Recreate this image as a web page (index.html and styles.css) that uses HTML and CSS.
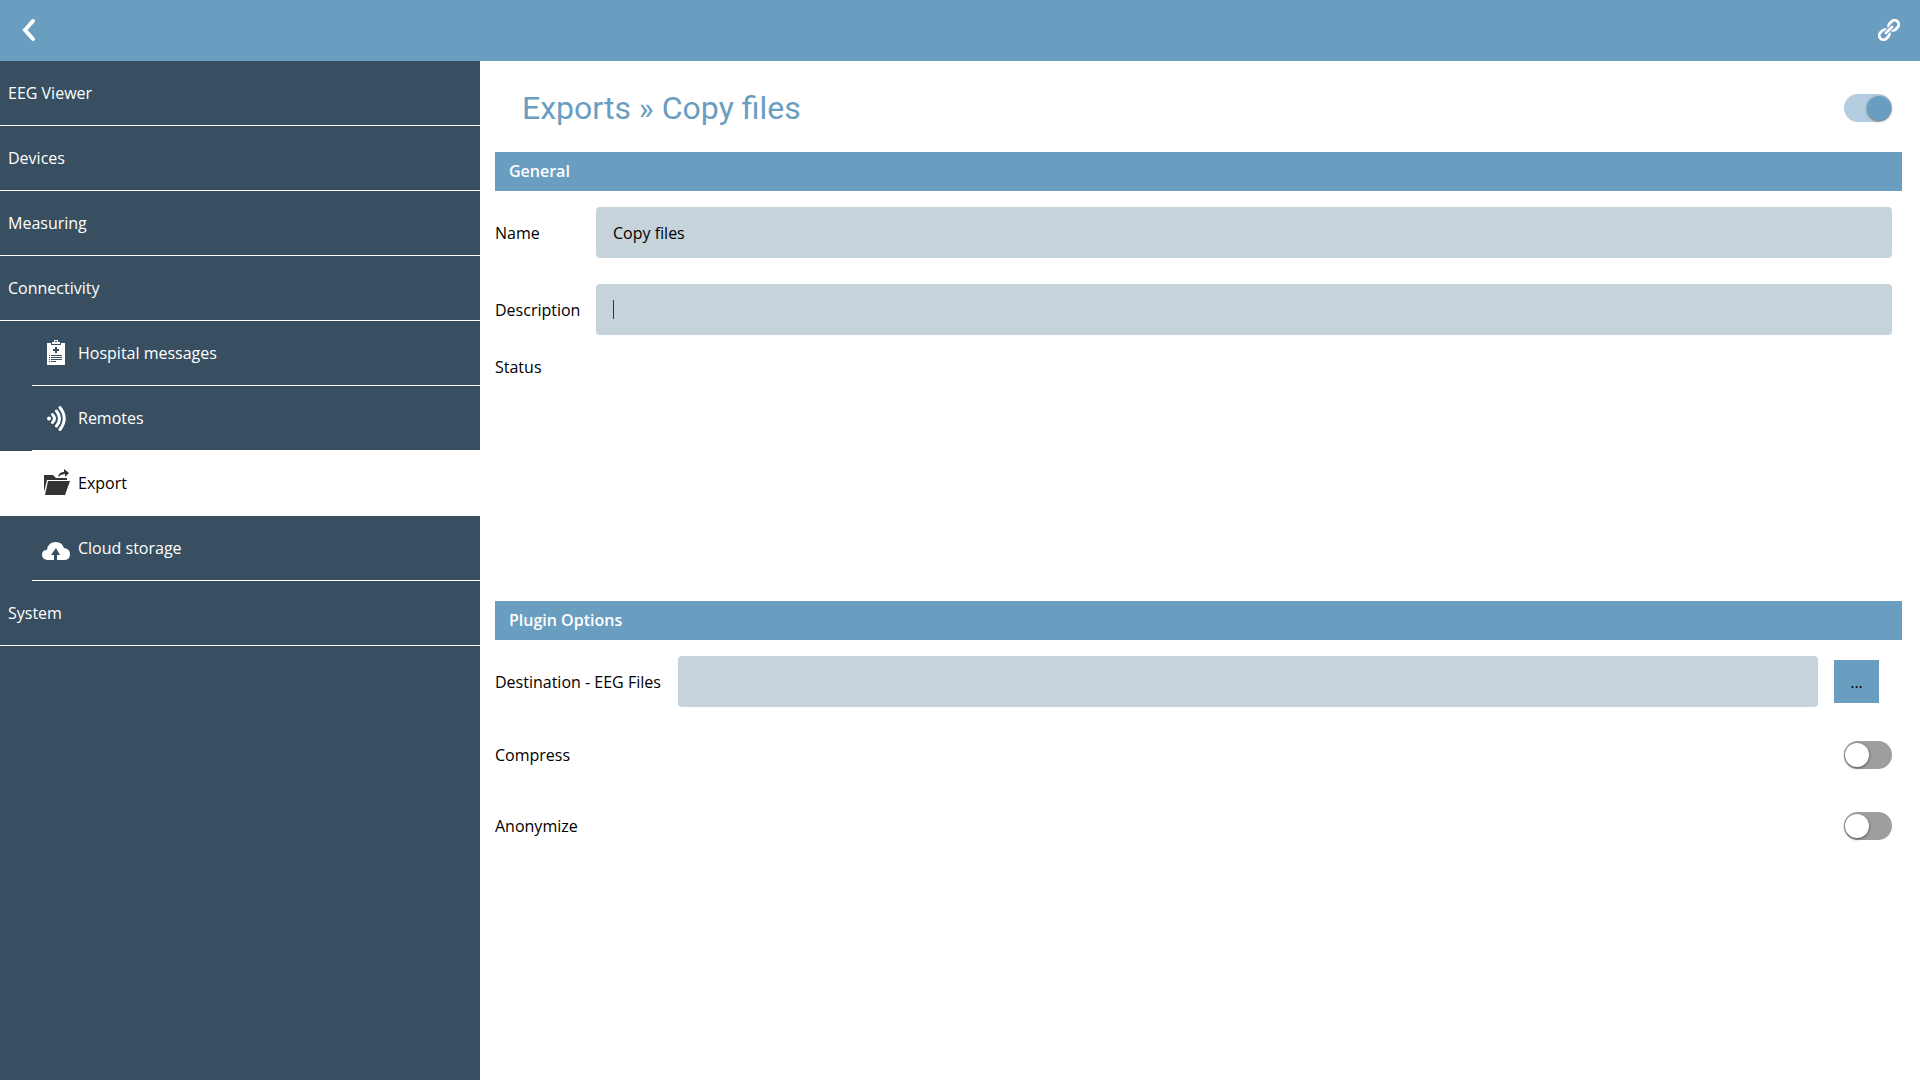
FILE: index.html
```html
<!DOCTYPE html>
<html lang="en">
<head>
  <meta charset="UTF-8" />
  <meta name="viewport" content="width=device-width, initial-scale=1.0" />
  <title>Exports » Copy files</title>
  <link rel="stylesheet" href="styles.css">
</head>
<body>
  <header class="topbar">
    <button class="icon-button" type="button" aria-label="Back">
      <svg width="16" height="24" viewBox="0 0 16 24"><path d="M13 3L5 12L13 21" fill="none" stroke="#fff" stroke-width="4" stroke-linecap="round"/></svg>
    </button>
    <button class="icon-button" type="button" aria-label="Link">
      <svg width="22" height="22" viewBox="0 0 22 22">
        <g fill="none" stroke="#fff" stroke-width="2.8" transform="rotate(-45 11 11)">
          <rect x="-1" y="6.8" width="10.8" height="8.4" rx="4.2"/>
          <rect x="12.2" y="6.8" width="10.8" height="8.4" rx="4.2"/>
          <path d="M7 11H15" stroke="#6a9ec1" stroke-width="4.4"/>
          <path d="M6.5 11H15.5" stroke-width="2.6" stroke-linecap="round"/>
        </g>
      </svg>
    </button>
  </header>

  <div class="layout">
    <nav class="sidebar">
      <a class="item" href="#">EEG Viewer</a>
      <a class="item" href="#">Devices</a>
      <a class="item" href="#">Measuring</a>
      <a class="item" href="#">Connectivity</a>
      <div class="submenu">
        <a class="item" href="#">
          <svg class="icon" width="28" height="28" viewBox="0 0 28 28">
            <path d="M5 4H9V6H19V4H23V26H5Z" fill="#fff"/>
            <path d="M10 5V3H12V1H16V3H18V5ZM13 2V3H15V2Z" fill="#fff" fill-rule="evenodd"/>
            <path d="M13 8H15V10H17V12H15V14H13V12H11V10H13ZM7 16H8V17H7ZM9 16H20V17H9ZM7 18H8V19H7ZM9 18H20V19H9ZM7 20H8V21H7ZM9 20H20V21H9ZM7 22H8V23H7ZM9 22H14V23H9Z" fill="#374f61"/>
          </svg>
          Hospital messages
        </a>
        <a class="item" href="#">
          <svg class="icon" width="28" height="28" viewBox="0 0 28 28">
            <circle cx="7" cy="14.5" r="2" fill="#fff"/>
            <path d="M10.5 10.5Q14.5 14.5 10.5 18.5M14.5 7Q20.5 14.5 14.5 22M18 3.5Q26.5 14.5 18 25.5" fill="none" stroke="#fff" stroke-width="3" stroke-linecap="round"/>
          </svg>
          Remotes
        </a>
        <a class="item active" href="#">
          <svg class="icon" width="28" height="28" viewBox="0 0 28 28">
            <path d="M2 6H11L14 9H25V11H5L2 23Z" fill="#333"/>
            <path d="M6 12H28L23 26H3Z" fill="#333"/>
            <path d="M16 8Q17 3 22 3V0L27 4L23 8V5Q19 5 16 8Z" fill="#333"/>
          </svg>
          Export
        </a>
        <a class="item" href="#">
          <svg class="icon" width="28" height="28" viewBox="0 0 28 28">
            <path d="M5 26Q0 25 0 21Q0 16 5 16Q6 8 14 8Q20 8 22 14Q28 15 28 20Q28 26 22 26H15V21H18L14 14L9 21H12V26Z" fill="#fff"/>
          </svg>
          Cloud storage
        </a>
      </div>
      <a class="item" href="#">System</a>
    </nav>

    <main class="content">
      <div class="title-row">
        <h1>Exports » Copy files</h1>
        <input class="toggle" type="checkbox" aria-label="Enable export" checked>
      </div>

      <section class="general">
        <h2>General</h2>
        <div class="field">
          <label for="name">Name</label>
          <input class="textbox" type="text" id="name" value="Copy files">
        </div>
        <div class="field">
          <label for="description">Description</label>
          <input class="textbox editing" type="text" id="description">
        </div>
        <p class="status">Status</p>
      </section>

      <section>
        <h2>Plugin Options</h2>
        <div class="field destination">
          <label for="destination">Destination - EEG Files</label>
          <input class="textbox" type="text" id="destination">
          <button class="browse" type="button">...</button>
        </div>
        <div class="option">
          <label for="compress">Compress</label>
          <input class="toggle" type="checkbox" id="compress">
        </div>
        <div class="option">
          <label for="anonymize">Anonymize</label>
          <input class="toggle" type="checkbox" id="anonymize">
        </div>
      </section>
    </main>
  </div>
</body>
</html>
```
FILE: styles.css
```css
* { box-sizing: border-box; }

body {
  margin: 0;
  min-height: 100vh;
  display: flex;
  flex-direction: column;
  font-family: "Open Sans", "Noto Sans", sans-serif;
  font-size: 16px;
  line-height: 24px;
  color: #000;
  background: #fff;
}

.topbar {
  display: flex;
  justify-content: space-between;
  align-items: center;
  height: 61px;
  padding: 0 20px 2px;
  background: #6a9ec1;
}

.icon-button {
  display: flex;
  padding: 0;
  border: none;
  background: none;
  cursor: pointer;
}

.layout {
  flex: 1;
  display: grid;
  grid-template-columns: 25% 1fr;
}

/* sidebar */
.sidebar {
  background: #374f61;
}

.item {
  display: flex;
  align-items: center;
  height: 65px;
  padding-left: 8px;
  border-bottom: 1px solid #fff;
  color: #fff;
  text-decoration: none;
}

.submenu .item {
  margin-left: 32px;
  gap: 8px;
}

.submenu .item.active {
  margin-left: 0;
  padding-left: 40px;
  background: #fff;
  color: #000;
}

.icon {
  margin-left: 2px;
}

/* content */
.content {
  padding: 0 18px 0 15px;
}

.title-row {
  display: flex;
  justify-content: space-between;
  align-items: center;
  height: 91px;
  padding: 2px 10px 0 27px;
}

h1 {
  margin: 0;
  font-family: Roboto, sans-serif;
  font-size: 32px;
  font-weight: 400;
  color: #6a9ec1;
}

h2 {
  margin: 0 0 16px;
  padding: 0 14px;
  font-size: 16px;
  font-weight: 600;
  line-height: 39px;
  color: #fff;
  background: #6a9ec1;
}

.general {
  min-height: 449px;
}

.field {
  display: grid;
  grid-template-columns: 101px 1fr;
  align-items: center;
  margin-bottom: 26px;
  padding-right: 10px;
}

.textbox {
  width: 100%;
  height: 51px;
  padding: 0 17px;
  border: none;
  border-radius: 4px;
  background: #c6d3da;
  font: inherit;
  color: #000;
  outline: none;
}

/* thin cursor line */
.editing {
  background: linear-gradient(#333, #333) 17px center / 1px 19px no-repeat #c6d3da;
  caret-color: transparent;
}

.status {
  margin: -6px 0 0;
}

.destination {
  grid-template-columns: 183px 1fr 61px;
  margin-bottom: 12px;
  padding-right: 23px;
}

.browse {
  width: 45px;
  height: 43px;
  margin-left: 16px;
  padding: 0;
  border: none;
  background: #6a9ec1;
  font: inherit;
  color: #000;
}

.option {
  display: flex;
  justify-content: space-between;
  align-items: center;
  height: 71px;
  padding-right: 10px;
}

.toggle {
  appearance: none;
  display: flex;
  align-items: center;
  width: 48px;
  height: 28px;
  margin: 0;
  padding: 0 1px;
  border-radius: 14px;
  background: #9e9e9e;
}

.toggle::before {
  content: "";
  width: 24px;
  height: 24px;
  border-radius: 50%;
  background: #fff;
  box-shadow: 0 1px 3px rgba(0, 0, 0, 0.5);
}

.toggle:checked {
  justify-content: flex-end;
  background: #b4cde0;
}

.toggle:checked::before {
  background: #6a9ec1;
}
```
